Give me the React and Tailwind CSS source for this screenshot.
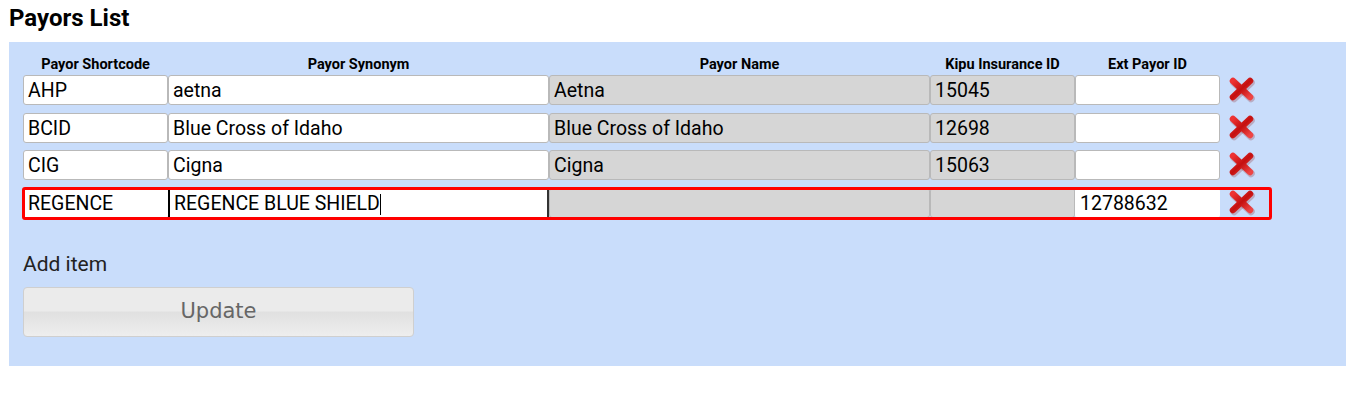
import React from "react";

const rows = [
  { code: "AHP", synonym: "aetna", name: "Aetna", kipu: "15045", ext: "" },
  { code: "BCID", synonym: "Blue Cross of Idaho", name: "Blue Cross of Idaho", kipu: "12698", ext: "" },
  { code: "CIG", synonym: "Cigna", name: "Cigna", kipu: "15063", ext: "" },
];

const cols = [
  { label: "Payor Shortcode", w: "w-[145px]" },
  { label: "Payor Synonym", w: "w-[381px]" },
  { label: "Payor Name", w: "w-[381px]" },
  { label: "Kipu Insurance ID", w: "w-[145px]" },
  { label: "Ext Payor ID", w: "w-[145px]" },
];

const RemoveIcon = () => (
  <svg width="30" height="28" viewBox="0 0 30 28" className="ml-[7px]">
    <defs>
      <linearGradient id="xg" x1="0" y1="0" x2="1" y2="1">
        <stop offset="0" stopColor="#e33" />
        <stop offset="0.5" stopColor="#c40f0f" />
        <stop offset="1" stopColor="#e44" />
      </linearGradient>
    </defs>
    <g stroke="#8a1a1a" strokeOpacity="0.25" strokeWidth="7.5" strokeLinecap="round" transform="translate(1 1.5)">
      <line x1="6" y1="5" x2="23" y2="21" />
      <line x1="23" y1="5" x2="6" y2="21" />
    </g>
    <g stroke="url(#xg)" strokeWidth="6.5" strokeLinecap="round">
      <line x1="6" y1="5" x2="23" y2="21" />
      <line x1="23" y1="5" x2="6" y2="21" />
    </g>
  </svg>
);

const Cell = ({ value, w, gray, className = "" }) => (
  <div
    className={`${w} h-[30px] flex items-center px-[4px] pt-[2px] border border-[#b9b9b9] rounded-[3px] text-[19.5px] text-black whitespace-nowrap ${gray ? "bg-[#d6d6d6]" : "bg-white"} ${className}`}
  >
    {value}
  </div>
);

const PayorRow = ({ r }) => (
  <div className="flex items-center">
    <Cell value={r.code} w="w-[145px]" />
    <Cell value={r.synonym} w="w-[381px]" />
    <Cell value={r.name} w="w-[381px]" gray />
    <Cell value={r.kipu} w="w-[145px]" gray />
    <Cell value={r.ext} w="w-[145px]" />
    <RemoveIcon />
  </div>
);

export default function App() {
  return (
    <div className="min-h-screen bg-white font-['Roboto','Liberation_Sans',sans-serif]">
      <h1 className="px-[9px] pt-[3px] h-[42px] text-[24px] font-bold text-black leading-[30px]">Payors List</h1>

      <div className="mx-[9px] w-[1337px] h-[324px] bg-[#c9ddfb] px-[14px] pt-[12px]">
        {/* Header */}
        <div className="flex h-[21px] items-center">
          {cols.map((c) => (
            <div key={c.label} className={`${c.w} text-center text-[14.5px] font-bold text-black whitespace-nowrap`}>
              {c.label}
            </div>
          ))}
        </div>

        {/* Rows */}
        <div className="flex flex-col gap-[7.5px]">
          {rows.map((r) => (
            <PayorRow key={r.code} r={r} />
          ))}

          <div className="relative flex items-center mt-[0.5px]">
            <Cell value="REGENCE" w="w-[145px]" className="border-white" />
            <div className="w-[381px] h-[30px] flex items-center px-[4px] pt-[2px] bg-white border-l-2 border-r-2 border-l-black border-r-[#333] text-[19.5px] text-black whitespace-nowrap">
              REGENCE BLUE SHIELD
              <span className="inline-block w-[1px] h-[21px] bg-black" />
            </div>
            <Cell value="" w="w-[381px]" gray />
            <Cell value="" w="w-[145px]" gray />
            <Cell value="12788632" w="w-[145px]" className="border-white" />
            <RemoveIcon />
            <div className="absolute -left-[1px] -top-[1px] w-[1250px] h-[33px] border-[3px] border-[#ff0000] rounded-[3px] pointer-events-none" />
          </div>
        </div>

        <div className="mt-[33px] text-[21px] text-[#222] leading-[26px]">Add item</div>

        <button className="mt-[10px] w-[391px] h-[50px] rounded-[4px] border border-[#cfcfcf] bg-[linear-gradient(#ebebeb_0%,#ebebeb_48%,#e0e0e0_50%,#eeeeee_100%)] text-[21px] text-[#666] font-['DejaVu_Sans',sans-serif]">
          Update
        </button>
      </div>
    </div>
  );
}
